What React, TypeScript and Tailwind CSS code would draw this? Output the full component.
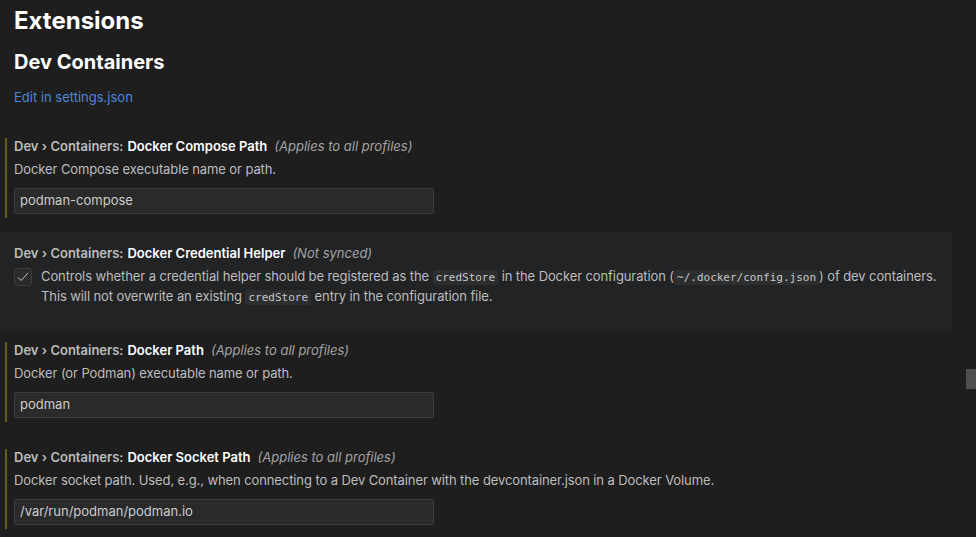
import type { ReactNode } from "react";

type SettingProps = {
  category: string;
  name: string;
  scope: string;
  modified?: boolean;
  focused?: boolean;
  children: ReactNode;
};

function Setting({ category, name, scope, modified, focused, children }: SettingProps) {
  return (
    <div className={focused ? "bg-[#222325] pt-[13px] pb-[14px] pl-[5px]" : "pt-[13px] pb-[14px] pl-[5px]"}>
      <div
        className={
          modified
            ? "border-l-2 border-[#6c5a1e] pl-[7px] pb-[4px]"
            : "border-l-2 border-transparent pl-[7px] pb-[4px]"
        }
      >
        <div className="flex h-4 items-center text-[13px] leading-4">
          <span className="font-semibold text-[#bcbcbc]">{category}</span>
          <span className="ml-[4px] font-semibold text-white">{name}</span>
          <span className="ml-[7px] italic text-[#a3a3a3]">{scope}</span>
        </div>
        {children}
      </div>
    </div>
  );
}

function TextInput({ value }: { value: string }) {
  return (
    <div className="mt-[10px] flex h-[26px] w-[420px] items-center rounded-[2px] border border-[#3c3c3c] bg-[#2a2a2a] px-[5px] text-[13px] text-[#cccccc]">
      {value}
    </div>
  );
}

function Code({ children }: { children: ReactNode }) {
  return (
    <code className="rounded-[3px] bg-[#2d2e30] px-[3px] py-[1px] font-['DejaVu_Sans_Mono',monospace] text-[11px] leading-[12px] tracking-normal text-[#c8c8c8]">
      {children}
    </code>
  );
}

export default function App() {
  return (
    <div className="relative h-[537px] w-[976px] overflow-hidden bg-[#1e1e1e] font-['Inter',sans-serif] antialiased">
      <div className="w-[952px]">
        <div className="px-[14px] pt-[4px]">
          <h1 className="text-[24px] font-bold leading-[34px] text-white">Extensions</h1>
          <h2 className="mt-[11px] text-[20px] font-bold leading-[26px] text-white">Dev Containers</h2>
          <a className="mt-[13px] block text-[13px] leading-[18px] text-[#4f86dd]">Edit in settings.json</a>
        </div>

        <div className="mt-[19px]">
          <Setting category="Dev › Containers:" name="Docker Compose Path" scope="(Applies to all profiles)" modified>
            <p className="mt-[6px] text-[13px] leading-[18px] tracking-[-0.1px] text-[#bdbdbd]">Docker Compose executable name or path.</p>
            <TextInput value="podman-compose" />
          </Setting>

          <Setting category="Dev › Containers:" name="Docker Credential Helper" scope="(Not synced)" focused>
            <div className="mt-[5px] flex gap-[9px] pb-[5px]">
              <div className="mt-[2px] flex h-[18px] w-[18px] shrink-0 items-center justify-center rounded-[3px] border border-[#3c3c3c] bg-[#2b2b2b]">
                <svg viewBox="0 0 16 16" className="h-[14px] w-[14px]" fill="none" stroke="#c8c8c8" strokeWidth="1.1">
                  <path d="M2.5 8.5l3.5 3.5 7.5-8.5" />
                </svg>
              </div>
              <p className="text-[13px] leading-[20px] tracking-[-0.1px] text-[#bdbdbd]">
                Controls whether a credential helper should be registered as the <Code>credStore</Code> in the Docker
                configuration (<Code>~/.docker/config.json</Code>) of dev containers.
                <br />
                This will not overwrite an existing <Code>credStore</Code> entry in the configuration file.
              </p>
            </div>
          </Setting>

          <Setting category="Dev › Containers:" name="Docker Path" scope="(Applies to all profiles)" modified>
            <p className="mt-[6px] text-[13px] leading-[18px] tracking-[-0.1px] text-[#bdbdbd]">Docker (or Podman) executable name or path.</p>
            <TextInput value="podman" />
          </Setting>

          <Setting category="Dev › Containers:" name="Docker Socket Path" scope="(Applies to all profiles)" modified>
            <p className="mt-[6px] text-[13px] leading-[18px] tracking-[-0.1px] text-[#bdbdbd]">
              Docker socket path. Used, e.g., when connecting to a Dev Container with the devcontainer.json in a Docker Volume.
            </p>
            <TextInput value="/var/run/podman/podman.io" />
          </Setting>
        </div>
      </div>

      <div className="absolute right-0 top-[369px] h-[20px] w-[10px] bg-[#4f4f4f]" />
    </div>
  );
}
